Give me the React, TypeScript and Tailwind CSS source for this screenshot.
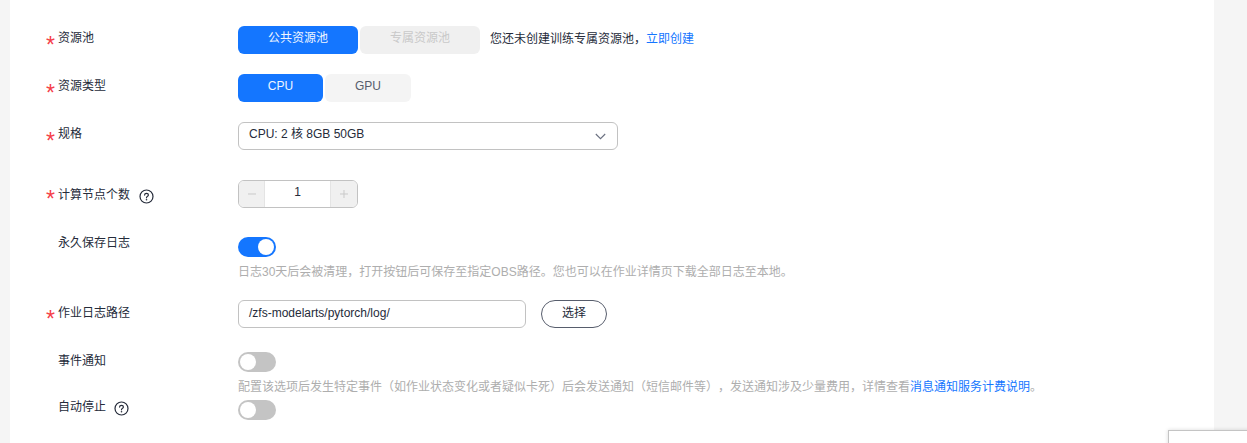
import type { ReactNode } from "react";

const font = "font-['Liberation_Sans','Noto_Sans_CJK_SC',sans-serif]";

const HelpIcon = () => (
  <svg width="15" height="15" viewBox="0 0 15 15" fill="none" className="shrink-0">
    <circle cx="7.5" cy="7.5" r="6.5" stroke="#252b3a" strokeWidth="1.2" />
    <path
      d="M5.6 6.1c0-1.1.8-1.8 1.9-1.8s1.9.7 1.9 1.7c0 .8-.5 1.2-1.1 1.6-.5.3-.8.6-.8 1.2"
      stroke="#252b3a"
      strokeWidth="1.2"
      strokeLinecap="round"
    />
    <circle cx="7.5" cy="10.8" r=".8" fill="#252b3a" />
  </svg>
);

const Label = ({
  required,
  help,
  helpGap,
  top,
  children,
}: {
  required?: boolean;
  help?: boolean;
  helpGap?: string;
  top: string;
  children: ReactNode;
}) => (
  <div className={`relative flex w-[192px] shrink-0 items-start pl-3 ${top}`}>
    {required && (
      <span className="absolute left-0 top-2 text-[23px] leading-[23px] text-[#f5404a]">*</span>
    )}
    <span className="text-[12px] leading-[16px] text-[#252b3a]">{children}</span>
    {help && (
      <span className={`${helpGap} mt-[2px]`}>
        <HelpIcon />
      </span>
    )}
  </div>
);

const Toggle = ({ on }: { on?: boolean }) => (
  <div
    className={`flex h-5 w-[38px] items-center rounded-full px-[2px] ${
      on ? "justify-end bg-[#1476ff]" : "justify-start bg-[#c4c4c4]"
    }`}
  >
    <div className="size-4 rounded-full bg-white" />
  </div>
);

const Segment = ({
  w,
  active,
  disabled,
  children,
}: {
  w: string;
  active?: boolean;
  disabled?: boolean;
  children: ReactNode;
}) => (
  <div
    className={`flex h-7 items-center justify-center rounded-[6px] pb-1 text-[12px] ${w} ${
      active
        ? "bg-[#1476ff] text-[#eef5ff]"
        : disabled
          ? "bg-[#f0f0f0] text-[#c9c9c9]"
          : "bg-[#f4f4f4] text-[#575d6c]"
    }`}
  >
    {children}
  </div>
);

export default function App() {
  return (
    <div className={`relative h-[443px] w-[1247px] overflow-hidden bg-[#f5f5f5] ${font}`}>
      <div className="ml-[10px] h-full w-[1204px] bg-white pl-[36px] pt-[26px]">
        <div className="flex h-7">
          <Label required top="pt-1">资源池</Label>
          <div className="flex items-center gap-[2px]">
            <Segment w="w-[120px]" active>公共资源池</Segment>
            <Segment w="w-[120px]" disabled>专属资源池</Segment>
          </div>
          <p className="ml-[10px] flex items-center pb-[2px] text-[12px] text-[#252b3a]">
            您还未创建训练专属资源池，<span className="text-[#1476ff]">立即创建</span>
          </p>
        </div>

        <div className="mt-5 flex h-7">
          <Label required top="pt-1">资源类型</Label>
          <div className="flex items-center gap-[2px]">
            <Segment w="w-[85px]" active>CPU</Segment>
            <Segment w="w-[86px]">GPU</Segment>
          </div>
        </div>

        <div className="mt-5 flex h-7">
          <Label required top="pt-1">规格</Label>
          <div className="flex h-7 w-[380px] items-center justify-between rounded-[6px] border border-[#c2c2c2] pl-[10px] pr-[11px]">
            <span className="pb-1 text-[12px] text-[#252b3a]">CPU: 2 核 8GB 50GB</span>
            <svg width="11" height="7" viewBox="0 0 11 7" fill="none">
              <path d="M.8 1l4.7 4.7L10.200 1" stroke="#6a7080" strokeWidth="1.1" />
            </svg>
          </div>
        </div>

        <div className="mt-[30px] flex h-7">
          <Label required help helpGap="ml-[9px]" top="pt-[7px]">计算节点个数</Label>
          <div className="flex h-7 w-[120px] overflow-hidden rounded-[6px] border border-[#c2c2c2]">
            <div className="flex w-[25px] items-center justify-center bg-[#f0f0f0]">
              <svg width="10" height="10" viewBox="0 0 10 10">
                <path d="M1 5h8" stroke="#c9c9c9" strokeWidth="1" />
              </svg>
            </div>
            <div className="flex flex-1 items-center justify-center border-x border-[#e4e4e4] pb-[5px] text-[12px] text-[#252b3a]">
              1
            </div>
            <div className="flex w-[26px] items-center justify-center bg-[#f0f0f0]">
              <svg width="10" height="10" viewBox="0 0 10 10">
                <path d="M1 5h8M5 1v8" stroke="#c9c9c9" strokeWidth="1" />
              </svg>
            </div>
          </div>
        </div>

        <div className="mt-[29px] flex h-[35px]">
          <Label top="-mt-[2px]">永久保存日志</Label>
          <div>
            <Toggle on />
            <p className="mt-[7px] text-[12px] leading-4 text-[#aeaeae]">
              日志30天后会被清理，打开按钮后可保存至指定OBS路径。您也可以在作业详情页下载全部日志至本地。
            </p>
          </div>
        </div>

        <div className="mt-7 flex h-7">
          <Label required top="pt-[5px]">作业日志路径</Label>
          <div className="flex h-7 w-[288px] items-center rounded-[6px] border border-[#c2c2c2] pl-[10px]">
            <span className="pb-[2px] text-[12px] text-[#252b3a]">/zfs-modelarts/pytorch/log/</span>
          </div>
          <div className="ml-[15px] flex h-7 w-[66px] items-center justify-center rounded-full border border-[#575d6c] pb-[2px] text-[12px] text-[#252b3a]">
            选择
          </div>
        </div>

        <div className="mt-6 flex h-[40px]">
          <Label top="pt-[1px]">事件通知</Label>
          <div>
            <Toggle />
            <p className="mt-[7px] text-[12px] leading-4 text-[#aeaeae] [text-spacing-trim:space-all]">
              配置该选项后发生特定事件（如作业状态变化或者疑似卡死）后会发送通知（短信邮件等），发送通知涉及少量费用，详情查看<span className="text-[#1476ff]">消息通知服务计费说明</span>。
            </p>
          </div>
        </div>

        <div className="mt-2 flex h-5">
          <Label help helpGap="ml-2" top="-mt-[1px]">自动停止</Label>
          <Toggle />
        </div>
      </div>

      <div className="absolute left-[1168px] top-[430px] h-[60px] w-[100px] border border-[#c4c4c4] bg-white shadow-[0_0_4px_rgba(0,0,0,0.15)]" />
    </div>
  );
}
